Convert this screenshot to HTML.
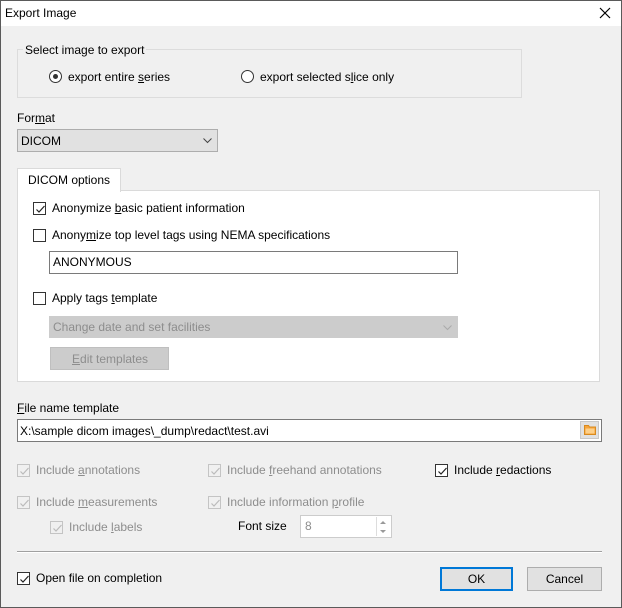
<!DOCTYPE html>
<html><head><style>
*{box-sizing:border-box;margin:0;padding:0}
body{width:622px;height:608px;background:#f0f0f0;font-family:"Liberation Sans",sans-serif;font-size:12px;color:#000;position:relative;overflow:hidden}
.a{position:absolute;white-space:nowrap}
.t{line-height:14px}
.cb{position:absolute;width:13px;height:13px;border:1px solid #333;background:#fff}
.cb.d{border-color:#c4c4c4;background:#f0f0f0}
.cb svg{position:absolute;left:1px;top:1px}
.g{color:#8d8d8d}
u{text-decoration:underline}
</style></head><body>
<div class="a" style="left:0;top:0;width:622px;height:26px;background:#fff"></div>
<div class="a t" style="left:5px;top:6px">Export Image</div>
<svg class="a" style="left:599px;top:7px" width="12" height="12"><path d="M1 1L11 11M11 1L1 11" stroke="#000" stroke-width="1.2"/></svg>

<div class="a" style="left:17px;top:49px;width:505px;height:49px;border:1px solid #dcdcdc"></div>
<div class="a t" style="left:23px;top:43px;background:#f0f0f0;padding:0 2px">Select image to export</div>
<div class="a" style="left:49px;top:70px;width:13px;height:13px;border:1px solid #333;border-radius:50%;background:#fff"><div style="position:absolute;left:3px;top:3px;width:5px;height:5px;border-radius:50%;background:#333"></div></div>
<div class="a t" style="left:68px;top:70px">export entire <u>s</u>eries</div>
<div class="a" style="left:241px;top:70px;width:13px;height:13px;border:1px solid #333;border-radius:50%;background:#fff"></div>
<div class="a t" style="left:260px;top:70px">export selected s<u>l</u>ice only</div>

<div class="a t" style="left:17px;top:111px">For<u>m</u>at</div>
<div class="a" style="left:17px;top:129px;width:201px;height:23px;border:1px solid #adadad;background:#e1e1e1"></div>
<div class="a t" style="left:21px;top:134px">DICOM</div>
<svg class="a" style="left:203px;top:138px" width="9" height="6"><path d="M0.5 0.5L4.5 4.5L8.5 0.5" stroke="#444" fill="none"/></svg>

<div class="a" style="left:17px;top:190px;width:583px;height:192px;border:1px solid #dadada;background:#fff"></div>
<div class="a" style="left:17px;top:168px;width:104px;height:24px;border:1px solid #dadada;border-bottom:none;background:#fff"></div>
<div class="a t" style="left:28px;top:173px">DICOM options</div>

<div class="cb" style="left:33px;top:202px"><svg width="11" height="11"><path d="M1.5 5.5L4 8L9.5 2" stroke="#222" fill="none" stroke-width="1.2"/></svg></div>
<div class="a t" style="left:52px;top:201px">Anonymize <u>b</u>asic patient information</div>
<div class="cb" style="left:33px;top:229px"></div>
<div class="a t" style="left:52px;top:228px">Anony<u>m</u>ize top level tags using NEMA specifications</div>
<div class="a" style="left:49px;top:251px;width:409px;height:23px;border:1px solid #7a7a7a;background:#fff"></div>
<div class="a t" style="left:53px;top:255px">ANONYMOUS</div>
<div class="cb" style="left:33px;top:292px"></div>
<div class="a t" style="left:52px;top:291px">Apply tags <u>t</u>emplate</div>
<div class="a" style="left:49px;top:316px;width:409px;height:22px;border:1px solid #cccccc;background:#cccccc"></div>
<div class="a t g" style="left:53px;top:320px">Change date and set facilities</div>
<svg class="a" style="left:443px;top:325px" width="9" height="6"><path d="M0.5 0.5L4.5 4.5L8.5 0.5" stroke="#aaa" fill="none"/></svg>
<div class="a" style="left:50px;top:347px;width:119px;height:23px;border:1px solid #bfbfbf;background:#cccccc"></div>
<div class="a t g" style="left:72px;top:352px"><u>E</u>dit templates</div>

<div class="a t" style="left:17px;top:401px"><u>F</u>ile name template</div>
<div class="a" style="left:17px;top:419px;width:585px;height:23px;border:1px solid #7a7a7a;background:#fff"></div>
<div class="a t" style="left:20px;top:424px">X:\sample dicom images\_dump\redact\test.avi</div>
<div class="a" style="left:580px;top:421px;width:19px;height:18px;background:#e1e1e1;border:1px solid #c8c8c8"></div>
<svg class="a" style="left:584px;top:424px" width="12" height="11"><path d="M0.5 1.5h4l1 1.5h6v7.5h-11z" fill="#f7a43a" stroke="#d88a1e"/><rect x="1.5" y="4.5" width="9" height="5" fill="#fdd08a"/></svg>

<div class="cb d" style="left:17px;top:464px"><svg width="11" height="11"><path d="M1.5 5.5L4 8L9.5 2" stroke="#bbb" fill="none" stroke-width="1.2"/></svg></div>
<div class="a t g" style="left:36px;top:463px">Include <u>a</u>nnotations</div>
<div class="cb d" style="left:208px;top:464px"><svg width="11" height="11"><path d="M1.5 5.5L4 8L9.5 2" stroke="#bbb" fill="none" stroke-width="1.2"/></svg></div>
<div class="a t g" style="left:227px;top:463px">Include <u>f</u>reehand annotations</div>
<div class="cb" style="left:435px;top:464px"><svg width="11" height="11"><path d="M1.5 5.5L4 8L9.5 2" stroke="#222" fill="none" stroke-width="1.2"/></svg></div>
<div class="a t" style="left:454px;top:463px">Include <u>r</u>edactions</div>

<div class="cb d" style="left:17px;top:496px"><svg width="11" height="11"><path d="M1.5 5.5L4 8L9.5 2" stroke="#bbb" fill="none" stroke-width="1.2"/></svg></div>
<div class="a t g" style="left:36px;top:495px">Include <u>m</u>easurements</div>
<div class="cb d" style="left:208px;top:496px"><svg width="11" height="11"><path d="M1.5 5.5L4 8L9.5 2" stroke="#bbb" fill="none" stroke-width="1.2"/></svg></div>
<div class="a t g" style="left:227px;top:495px">Include information <u>p</u>rofile</div>
<div class="cb d" style="left:50px;top:521px"><svg width="11" height="11"><path d="M1.5 5.5L4 8L9.5 2" stroke="#bbb" fill="none" stroke-width="1.2"/></svg></div>
<div class="a t g" style="left:69px;top:520px">Include <u>l</u>abels</div>
<div class="a t" style="left:238px;top:519px">Font size</div>
<div class="a" style="left:300px;top:515px;width:92px;height:23px;border:1px solid #cccccc;background:#fff"></div>
<div class="a t g" style="left:305px;top:519px">8</div>
<div class="a" style="left:376px;top:517px;width:14px;height:19px;border-left:1px solid #ddd"></div>
<svg class="a" style="left:379px;top:519px" width="8" height="16"><path d="M1 5L4 2L7 5z M1 11L4 14L7 11z" fill="#999"/></svg>

<div class="a" style="left:17px;top:551px;width:585px;height:1px;background:#a0a0a0"></div>
<div class="a" style="left:17px;top:552px;width:585px;height:1px;background:#fff"></div>

<div class="cb" style="left:17px;top:572px"><svg width="11" height="11"><path d="M1.5 5.5L4 8L9.5 2" stroke="#222" fill="none" stroke-width="1.2"/></svg></div>
<div class="a t" style="left:36px;top:571px">Open file on completion</div>
<div class="a" style="left:440px;top:567px;width:73px;height:24px;border:2px solid #0078d7;background:#e1e1e1"></div>
<div class="a t" style="left:440px;top:572px;width:73px;text-align:center">OK</div>
<div class="a" style="left:527px;top:567px;width:75px;height:24px;border:1px solid #adadad;background:#e1e1e1"></div>
<div class="a t" style="left:527px;top:572px;width:75px;text-align:center">Cancel</div>
<div class="a" style="left:0;top:0;width:622px;height:608px;border:1px solid #5a5a5a;pointer-events:none"></div>
</body></html>
